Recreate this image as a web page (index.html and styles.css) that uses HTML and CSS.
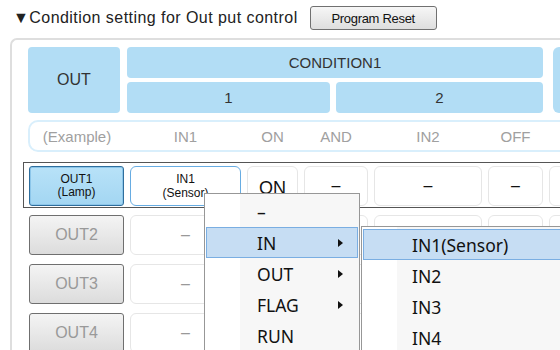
FILE: index.html
```html
<!DOCTYPE html>
<html lang="en">

<head>
  <meta charset="UTF-8">
  <title>Condition setting</title>
  <link rel="stylesheet" href="styles.css">
</head>

<body>

  <header class="title-bar">
    <span class="title">&#9660;Condition setting for Out put control</span>
    <button class="btn-reset">Program Reset</button>
  </header>

  <main class="panel">
    <div class="head">
      <div class="head-out">OUT</div>
      <div class="cond">
        <div class="cond-name">CONDITION1</div>
        <div class="cond-sub">
          <div>1</div>
          <div>2</div>
        </div>
      </div>
      <div class="cond-next"></div>
    </div>

    <div class="example">
      <span>(Example)</span>
      <span>IN1</span>
      <span>ON</span>
      <span>AND</span>
      <span>IN2</span>
      <span>OFF</span>
      <span></span>
    </div>

    <div class="rows">
      <div class="row row-active">
        <button class="out-btn out-on">OUT1<br>(Lamp)</button>
        <div class="cell cell-sel">IN1<br>(Sensor)</div>
        <div class="cell cell-big">ON</div>
        <div class="cell dark">&ndash;</div>
        <div class="cell dark">&ndash;</div>
        <div class="cell dark">&ndash;</div>
        <div class="cell"></div>
      </div>
      <div class="row">
        <button class="out-btn">OUT2</button>
        <div class="cell">&ndash;</div>
        <div class="cell"></div>
        <div class="cell"></div>
        <div class="cell"></div>
        <div class="cell"></div>
        <div class="cell"></div>
      </div>
      <div class="row">
        <button class="out-btn">OUT3</button>
        <div class="cell">&ndash;</div>
        <div class="cell"></div>
        <div class="cell"></div>
        <div class="cell"></div>
        <div class="cell"></div>
        <div class="cell"></div>
      </div>
      <div class="row">
        <button class="out-btn">OUT4</button>
        <div class="cell">&ndash;</div>
        <div class="cell"></div>
        <div class="cell"></div>
        <div class="cell"></div>
        <div class="cell"></div>
        <div class="cell"></div>
      </div>
    </div>
  </main>

  <!-- popup menu over the table -->
  <ul class="menu menu-main">
    <li>&ndash;</li>
    <li class="hover sub">IN</li>
    <li class="sub">OUT</li>
    <li class="sub">FLAG</li>
    <li>RUN</li>
  </ul>

  <ul class="menu menu-in">
    <li class="hover">IN1(Sensor)</li>
    <li>IN2</li>
    <li>IN3</li>
    <li>IN4</li>
  </ul>

</body>

</html>
```

FILE: styles.css
```css
/* Reset styles */
* {
  margin: 0;
  padding: 0;
  box-sizing: border-box;
}

body {
  font-family: "Liberation Sans", Arial, sans-serif;
  background-color: #fff;
  color: #333;
  width: 560px;
  height: 350px;
  overflow: hidden;
  position: relative;
}

/* Title bar */
.title-bar {
  display: flex;
  align-items: center;
  height: 38px;
  padding: 0 0 2px 13px;
}

.title {
  font-size: 16px;
  letter-spacing: 0.45px;
  color: #222;
}

.btn-reset {
  margin-left: 12px;
  width: 127px;
  height: 24px;
  font-family: "Liberation Sans", Arial, sans-serif;
  font-size: 13px;
  letter-spacing: -0.3px;
  color: #111;
  border: 1px solid #707070;
  border-radius: 3px;
  background: linear-gradient(#f6f6f6, #dedede);
}

/* Panel */
.panel {
  margin-left: 10px;
  width: 550px;
  height: 312px;
  border: 2px solid #dedede;
  border-right: none;
  border-bottom: none;
  border-radius: 7px 0 0 0;
  padding: 7px 0 0 16px;
  overflow: hidden;
}

.head {
  display: flex;
  gap: 7px;
  height: 66px;
}

.head-out {
  flex: 0 0 92px;
  background-color: #b2ddf5;
  border-radius: 4px;
  display: flex;
  align-items: center;
  justify-content: center;
  font-size: 16px;
}

.cond {
  flex: 0 0 416px;
  display: flex;
  flex-direction: column;
  gap: 4px;
}

.cond-name,
.cond-sub div {
  flex: 1;
  background-color: #b2ddf5;
  border-radius: 4px;
  display: flex;
  align-items: center;
  justify-content: center;
  font-size: 15px;
}

.cond-sub {
  flex: 1;
  display: flex;
  gap: 6px;
}

.cond-sub div:first-child {
  flex: 0 0 203px;
}

.cond-next {
  margin-left: 3px;
  flex: 0 0 60px;
  background-color: #b2ddf5;
  border-radius: 6px;
}

/* Example row */
.example {
  margin-top: 7px;
  width: 560px;
  height: 32px;
  border: 2px solid #d9effc;
  border-radius: 10px;
  display: grid;
  grid-template-columns: 94px 111px 51px 64px 108px 55px 60px;
  column-gap: 6px;
  align-items: center;
  color: #a0a0a0;
  font-size: 15px;
}

.example span {
  text-align: center;
}

/* Data rows */
.rows {
  margin: 10px 0 0 -5px;
  display: flex;
  flex-direction: column;
  gap: 3px;
}

.row {
  display: grid;
  grid-template-columns: 95px 111px 51px 64px 108px 55px 60px;
  column-gap: 6px;
  width: 580px;
  height: 46px;
  padding: 3px 5px 1px 5px;
  border: 1px solid transparent;
}

.row-active {
  border-color: #555;
}

.out-btn {
  height: 40px;
  font-family: "Liberation Sans", Arial, sans-serif;
  font-size: 16px;
  color: #999;
  border: 1px solid #6f6f6f;
  border-radius: 3px;
  background: linear-gradient(#f4f4f4, #dcdcdc);
}

.out-on {
  font-size: 12px;
  line-height: 13px;
  color: #111;
  border-color: #2f6e9c;
  background: linear-gradient(#b8e2f8, #a3d6f2);
  box-shadow: inset 0 0 0 1px #8cc6ea;
}

.cell {
  height: 40px;
  border: 1px solid #e6e6e6;
  border-radius: 6px;
  display: flex;
  align-items: center;
  justify-content: center;
  text-align: center;
  font-size: 16px;
  color: #999;
}

.cell.dark {
  color: #111;
}

.cell-sel {
  border: 1px solid #67ace2;
  font-size: 12px;
  line-height: 14px;
  color: #111;
}

.cell-big {
  font-size: 18px;
  color: #111;
  padding-top: 4px;
}

/* Popup menus */
.menu {
  position: absolute;
  list-style-type: none;
  font-family: "Noto Sans", sans-serif;
  font-size: 17.5px;
  color: #111;
  background: linear-gradient(to right, #fff 35px, #f7f7f7 35px);
  border: 1px solid #979797;
  border-bottom: none;
  padding: 2px 1px 0;
  overflow: hidden;
}

.menu li {
  position: relative;
  height: 31px;
  line-height: 31px;
  border: 1px solid transparent;
}

.menu li.hover {
  background-color: #c6ddf3;
  border-color: #7aaee2;
}

.menu li.sub::after {
  content: "";
  position: absolute;
  right: 14px;
  top: 11px;
  border-left: 5px solid #111;
  border-top: 4px solid transparent;
  border-bottom: 4px solid transparent;
}

.menu-main {
  left: 204px;
  top: 193px;
  width: 156px;
  height: 157px;
}

.menu-main li {
  padding-left: 50px;
}

.menu-in {
  left: 361px;
  top: 226px;
  width: 199px;
  height: 124px;
  border-right: none;
  padding-right: 0;
}

.menu-in li {
  padding-left: 48px;
  border-right: none;
}
```
